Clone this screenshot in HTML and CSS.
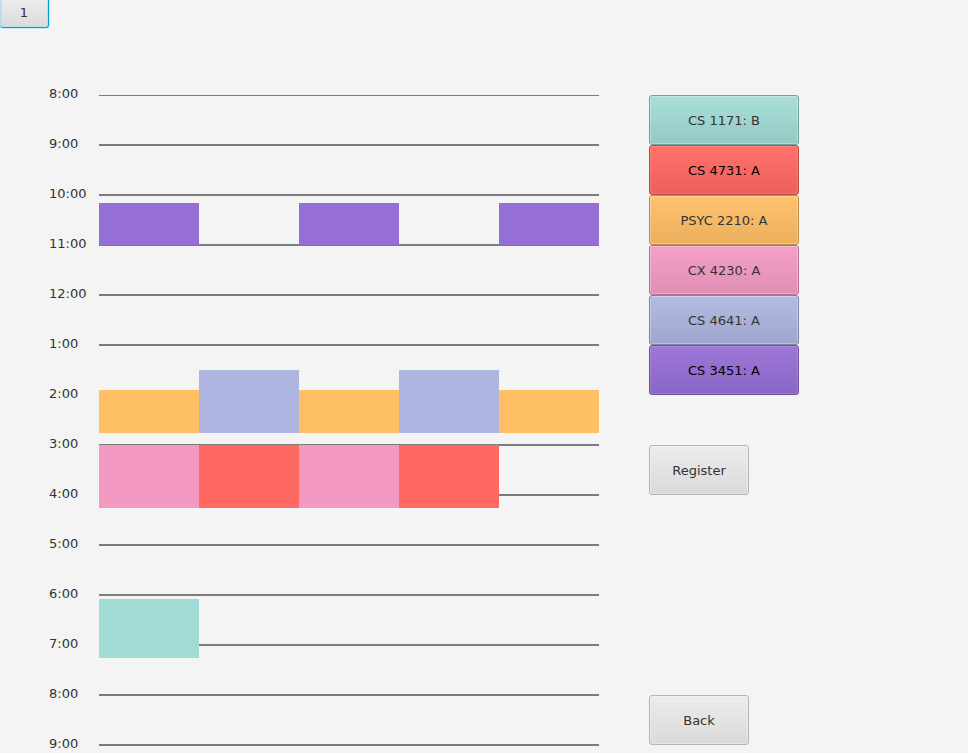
FILE: index.html
```html
<!DOCTYPE html>
<html lang="en">
<head>
<meta charset="utf-8">
<title>Schedule</title>
<link rel="stylesheet" href="styles.css">
</head>
<body>
<nav class="tabs" aria-label="Schedules">
  <button type="button" class="tab">1</button>
</nav>
<main class="planner">
  <ol class="hours">
    <li>8:00</li>
    <li>9:00</li>
    <li>10:00</li>
    <li>11:00</li>
    <li>12:00</li>
    <li>1:00</li>
    <li>2:00</li>
    <li>3:00</li>
    <li>4:00</li>
    <li>5:00</li>
    <li>6:00</li>
    <li>7:00</li>
    <li>8:00</li>
    <li>9:00</li>
  </ol>
  <section class="week" aria-label="Week">
    <div class="lines">
      <hr><hr><hr><hr><hr><hr><hr><hr><hr><hr><hr><hr><hr><hr>
    </div>
    <div class="block cs3451 mon"></div>
    <div class="block cs3451 wed"></div>
    <div class="block cs3451 fri"></div>
    <div class="block psyc2210 mon"></div>
    <div class="block psyc2210 wed"></div>
    <div class="block psyc2210 fri"></div>
    <div class="block cs4641 tue"></div>
    <div class="block cs4641 thu"></div>
    <div class="block cx4230 mon"></div>
    <div class="block cx4230 wed"></div>
    <div class="block cs4731 tue"></div>
    <div class="block cs4731 thu"></div>
    <div class="block cs1171 mon"></div>
  </section>
  <aside class="side">
    <div class="courses">
      <button type="button" class="button course teal">CS 1171: B</button>
      <button type="button" class="button course red dark-text">CS 4731: A</button>
      <button type="button" class="button course orange">PSYC 2210: A</button>
      <button type="button" class="button course pink">CX 4230: A</button>
      <button type="button" class="button course blue">CS 4641: A</button>
      <button type="button" class="button course purple dark-text">CS 3451: A</button>
    </div>
    <button type="button" class="button action">Register</button>
    <button type="button" class="button action back">Back</button>
  </aside>
</main>
</body>
</html>
```
FILE: styles.css
```css
* {
  box-sizing: border-box;
}

body {
  margin: 0;
  background: #f4f4f4;
  color: #333;
  font: 13px/18px "DejaVu Sans", sans-serif;
}

button {
  margin: 0;
  color: #333;
  font: inherit;
}

.tabs {
  display: flex;
  height: 28px;
}

.tab {
  width: 49px;
  padding: 0 0 2px;
  border: solid #039ed3;
  border-width: 0 1px 1px 0;
  border-radius: 0 0 3px 3px;
  background: linear-gradient(#ececec, #dadada);
  box-shadow: 0 0 0 1px #c9e8f2, inset 2px -1px 0 #b9dfea, inset -1px 0 0 #b9dfea;
}

.planner {
  display: grid;
  grid-template-columns: 50px minmax(0, 1fr) 150px;
  align-items: start;
  padding: 57px 169px 0 49px;
}

.hours {
  display: flex;
  flex-direction: column;
  gap: 32px;
  margin: 0;
  padding: 0;
  list-style: none;
}

/* One grid row per pixel; an hour spans fifty rows. */
.week {
  display: grid;
  grid-template-columns: repeat(5, 1fr);
  grid-template-rows: repeat(652, 1px);
  margin: 9px 50px 0 0;
}

.lines {
  grid-area: 1 / 1 / -1 / -1;
  display: flex;
  flex-direction: column;
  gap: 48px;
}

.lines hr {
  width: 100%;
  height: 2px;
  margin: 0;
  border: 0;
  background: #7c7c7c;
}

.lines hr:first-child {
  height: 1px;
  margin-top: 1px;
}

.mon { grid-column: 1; }
.tue { grid-column: 2; }
.wed { grid-column: 3; }
.thu { grid-column: 4; }
.fri { grid-column: 5; }

.cs3451 { grid-row: 110 / span 42; background: #966fd6; }
.psyc2210 { grid-row: 297 / span 43; background: #ffbf65; }
.cs4641 { grid-row: 277 / span 63; background: #aeb5e0; }
.cx4230 { grid-row: 352 / span 63; background: #f49ac2; }
.cs4731 { grid-row: 352 / span 63; background: #ff6961; }
.cs1171 { grid-row: 506 / span 59; background: #a0dcd5; }

.side {
  display: flex;
  flex-direction: column;
  align-items: flex-start;
  padding-top: 10px;
}

.courses {
  display: flex;
  flex-direction: column;
  width: 100%;
}

.button {
  height: 50px;
  padding: 2px 0 0;
  border: 1px solid #b5b5b5;
  border-radius: 3px;
  background: linear-gradient(#ececec, #dadada);
  box-shadow: inset 0 0 0 1px rgba(255, 255, 255, 0.3);
}

.course {
  width: 100%;
}

.dark-text {
  color: #000;
}

.teal { border-color: #74a09b; background: linear-gradient(#a9dfd8, #94cac4); }
.red { border-color: #bd4d47; background: linear-gradient(#ff736b, #eb6059); box-shadow: inset 0 0 0 1px rgba(255, 255, 255, 0.1); }
.orange { border-color: #bc8c49; background: linear-gradient(#ffc370, #ebaf5d); }
.pink { border-color: #b4718f; background: linear-gradient(#f5a1c7, #e08eb3); }
.blue { border-color: #7f84a5; background: linear-gradient(#b4bbe2, #a0a7ce); }
.purple { border-color: #6d519d; background: linear-gradient(#9d77d9, #8966c4); box-shadow: inset 0 0 0 1px rgba(255, 255, 255, 0.15); }

.action {
  width: 100px;
  margin-top: 50px;
}

.back {
  margin-top: 200px;
}
```
